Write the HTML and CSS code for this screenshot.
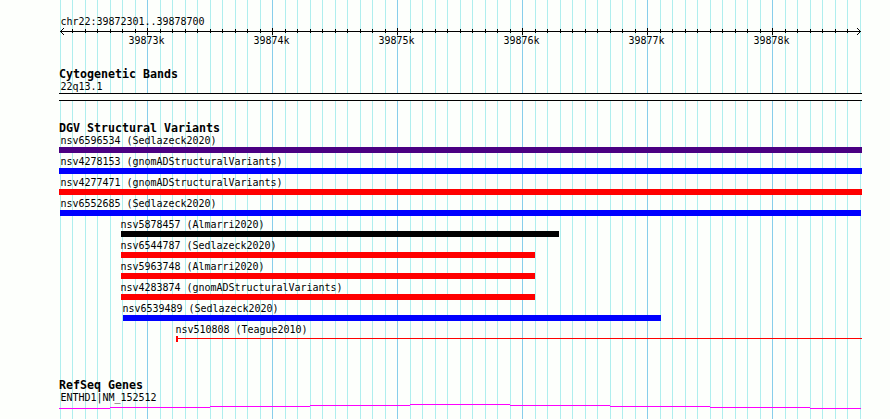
FILE: index.html
```html
<!DOCTYPE html>
<html lang="en">
<head>
  <meta charset="UTF-8">
  <title>chr22:39872301..39878700</title>
  <link rel="stylesheet" href="styles.css">
</head>
<body>
  <div class="browser">
    <div class="ruler">
      <div class="region label">chr22:39872301..39878700</div>
      <div class="axis">
        <svg class="arrow" width="4" height="7" viewBox="0 0 4 7"><path d="M3 0h1v1h-1zM2 1h1v1h-1zM1 2h1v1h-1zM0 3h1v1h-1zM1 4h1v1h-1zM2 5h1v1h-1zM3 6h1v1h-1z"/></svg>
        <svg class="arrow" width="4" height="7" viewBox="0 0 4 7"><path d="M0 0h1v1h-1zM1 1h1v1h-1zM2 2h1v1h-1zM3 3h1v1h-1zM2 4h1v1h-1zM1 5h1v1h-1zM0 6h1v1h-1z"/></svg>
      </div>
      <div class="scale label">
        <span>39873k</span><span>39874k</span><span>39875k</span><span>39876k</span><span>39877k</span><span>39878k</span>
      </div>
    </div>

    <div class="track bands">
      <h2>Cytogenetic Bands</h2>
      <div class="label">22q13.1</div>
      <div class="band"></div>
    </div>

    <div class="track variants">
      <h2>DGV Structural Variants</h2>
      <div class="feature"><div class="label">nsv6596534 (Sedlazeck2020)</div><div class="bar purple"></div></div>
      <div class="feature"><div class="label">nsv4278153 (gnomADStructuralVariants)</div><div class="bar blue"></div></div>
      <div class="feature"><div class="label">nsv4277471 (gnomADStructuralVariants)</div><div class="bar red"></div></div>
      <div class="feature inset"><div class="label">nsv6552685 (Sedlazeck2020)</div><div class="bar blue"></div></div>
      <div class="feature" style="margin-left:62px;width:438px"><div class="label">nsv5878457 (Almarri2020)</div><div class="bar black"></div></div>
      <div class="feature" style="margin-left:62px;width:414px"><div class="label">nsv6544787 (Sedlazeck2020)</div><div class="bar red"></div></div>
      <div class="feature" style="margin-left:62px;width:414px"><div class="label">nsv5963748 (Almarri2020)</div><div class="bar red"></div></div>
      <div class="feature" style="margin-left:62px;width:414px"><div class="label">nsv4283874 (gnomADStructuralVariants)</div><div class="bar red"></div></div>
      <div class="feature" style="margin-left:64px;width:538px"><div class="label">nsv6539489 (Sedlazeck2020)</div><div class="bar blue"></div></div>
      <div class="feature" style="margin-left:117px;width:686px"><div class="label">nsv510808 (Teague2010)</div><div class="bar span"></div></div>
    </div>

    <div class="track genes">
      <h2>RefSeq Genes</h2>
      <div class="label">ENTHD1|NM_152512</div>
      <svg class="intron" width="803" height="5" viewBox="0 0 803 5">
        <path d="M0 4h51v1h-51zM51 3h100v1h-100zM151 2h100v1h-100zM251 1h100v1h-100zM351 0h100v1h-100zM451 1h100v1h-100zM551 2h100v1h-100zM651 3h100v1h-100zM751 4h51v1h-51z"/>
      </svg>
    </div>
  </div>
</body>
</html>
```

FILE: styles.css
```css
*{margin:0; padding:0; box-sizing:border-box;}
body{background:#fdfffc; color:#000; overflow:hidden;}
.browser{
  width:803px; height:419px; margin-left:59px;
  background:
    linear-gradient(90deg, #87ceeb 1px, transparent 1px) 88px 0 / 125px 100% repeat-x,
    linear-gradient(90deg, #afeeee 1px, transparent 1px) 1px 0 / 25px 100% repeat-x,
    linear-gradient(90deg, #afeeee 1px, transparent 1px) 13px 0 / 25px 100% repeat-x;
}
.label{font:10px/12px "DejaVu Sans Mono", monospace; letter-spacing:-0.02px; white-space:pre; height:12px; padding-left:1.5px;}
h2{font:bold 11.63px/14px "DejaVu Sans Mono", monospace; height:14px; white-space:pre;}

.ruler{padding-top:16px; height:67px;}
/* the end positions carry arrow heads instead of ticks */
.axis{
  display:flex; justify-content:space-between;
  height:7px; margin:0 1px; padding:0 1px;
  background:
    linear-gradient(#000, #000) 0 3px / 100% 1px no-repeat border-box,
    linear-gradient(90deg, #000 1px, transparent 1px) 86px 0 / 125px 7px repeat-x content-box,
    linear-gradient(90deg, #000 1px, transparent 1px) 24px 1px / 25px 4px repeat-x content-box,
    linear-gradient(90deg, #000 1px, transparent 1px) 11px 1px / 25px 4px repeat-x content-box;
}
.arrow{display:block; margin:0 -1px;}
.arrow path{fill:#000;}
.scale{display:flex; padding-left:69.5px; gap:89px;}
.scale span{width:36px;}

.bands{height:54px;}
.band{height:8px; background:#fdfffc; border:solid #000; border-width:1px 0;}

.variants{height:257px;}
.feature{height:21px;}
.feature .label{line-height:12px;}
.inset{margin:0 1px;}
.inset .label{padding-left:0.5px;}
.feature[style] .label{padding-left:0.5px; margin-left:-1px;}
.bar{height:6px;}
.purple{background:#4b0082;}
.blue{background:#00f;}
.red{background:#f00;}
.black{background:#000;}
.span{border-left:2px solid #f00; background:linear-gradient(#f00, #f00) 0 2px / 100% 1px no-repeat;}

.intron{display:block;}
.intron path{fill:#f0f;}
```
